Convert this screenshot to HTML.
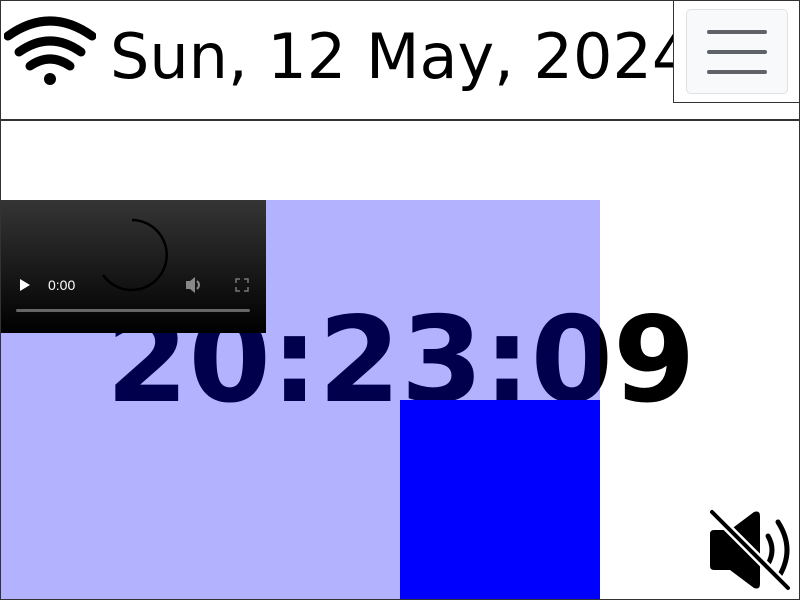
<!DOCTYPE html>
<html><head><style>
*{margin:0;padding:0;box-sizing:border-box}
body{width:800px;height:600px;overflow:hidden;background:#fff;font-family:"DejaVu Sans","Liberation Sans",sans-serif;position:relative}
.frame{position:absolute;left:0;top:0;width:800px;height:600px;border:1px solid #333;z-index:20;pointer-events:none}
.hdr{position:absolute;left:0;top:0;width:800px;height:121px;border-bottom:2px solid #333;overflow:hidden}
.date{position:absolute;left:110px;top:20px;font-size:62px;white-space:nowrap;color:#000}
.menu{position:absolute;left:673px;top:0;width:127px;height:103px;background:#fff;border:1px solid #333;border-top:none;border-right:none}
.btn{position:absolute;left:12px;top:9px;width:102px;height:85px;background:#f8f9fa;border:1px solid #dee2e6;border-radius:5px}
.btn i{position:absolute;left:20px;width:60px;height:4px;border-radius:2px;background:#5f6368}
.time{position:absolute;left:106px;top:291px;font-size:118.5px;font-weight:bold;color:#000;white-space:nowrap}
.ov{position:absolute;left:0;top:200px;width:600px;height:400px;background:rgba(0,0,255,0.3)}
.sq{position:absolute;left:400px;top:400px;width:200px;height:200px;background:#00f}
.vid{position:absolute;left:0;top:200px;width:266px;height:133px;background:linear-gradient(#353535,#000)}
</style></head><body>
<div class="hdr">
<svg style="position:absolute;left:4px;top:16px" width="92" height="70" viewBox="0 0 92 70">
<path d="M4 20 Q46 -10 88 20" stroke="#000" stroke-width="9" fill="none" stroke-linecap="round"/>
<path d="M15 36 Q46 14 77 36" stroke="#000" stroke-width="9" fill="none" stroke-linecap="round"/>
<path d="M26 50 Q46 36 66 50" stroke="#000" stroke-width="9" fill="none" stroke-linecap="round"/>
<ellipse cx="46" cy="63" rx="6" ry="6" fill="#000"/>
</svg>
<div class="date">Sun, 12 May, 2024</div>
<div class="menu"><div class="btn"><i style="top:20px"></i><i style="top:40px"></i><i style="top:60px"></i></div></div>
</div>
<div class="time">20:23:09</div>
<div class="ov"></div>
<div class="sq"></div>
<div class="vid">
<svg width="266" height="133" style="position:absolute;left:0;top:0">
<path d="M132 20 A35 35 0 1 1 103 75" stroke="#000" stroke-width="2.5" fill="none"/>
<path d="M20 79 L30 85 L20 91Z" fill="#fff"/>
<text x="48" y="90" font-family="Liberation Sans,sans-serif" font-size="14" fill="#fff">0:00</text>
<path d="M186 81h4l5-4v16l-5-4h-4z" fill="#888"/><path d="M197 81q4 4 0 8" stroke="#888" stroke-width="2" fill="none"/>
<path d="M236 83v-4h4M244 79h4v4M248 87v4h-4M240 91h-4v-4" stroke="#777" stroke-width="1.5" fill="none"/>
<rect x="16" y="109" width="234" height="3" rx="1.5" fill="#666"/>
</svg>
</div>
<svg style="position:absolute;left:706px;top:506px" width="90" height="88" viewBox="0 0 90 88">
<path d="M8 24 H24 L48 6 Q54 4 54 10 V78 Q54 84 48 82 L24 64 H8 Q4 64 4 60 V28 Q4 24 8 24 Z" fill="#000"/>
<path d="M62 30 Q70 44 62 58" stroke="#000" stroke-width="5" fill="none" stroke-linecap="round"/>
<path d="M72 16 Q90 44 72 72" stroke="#000" stroke-width="5" fill="none" stroke-linecap="round"/>
<path d="M6 6 L82 82" stroke="#fff" stroke-width="9"/>
<path d="M6 6 L82 82" stroke="#000" stroke-width="4" stroke-linecap="round"/>
</svg>
<div class="frame"></div>
</body></html>
